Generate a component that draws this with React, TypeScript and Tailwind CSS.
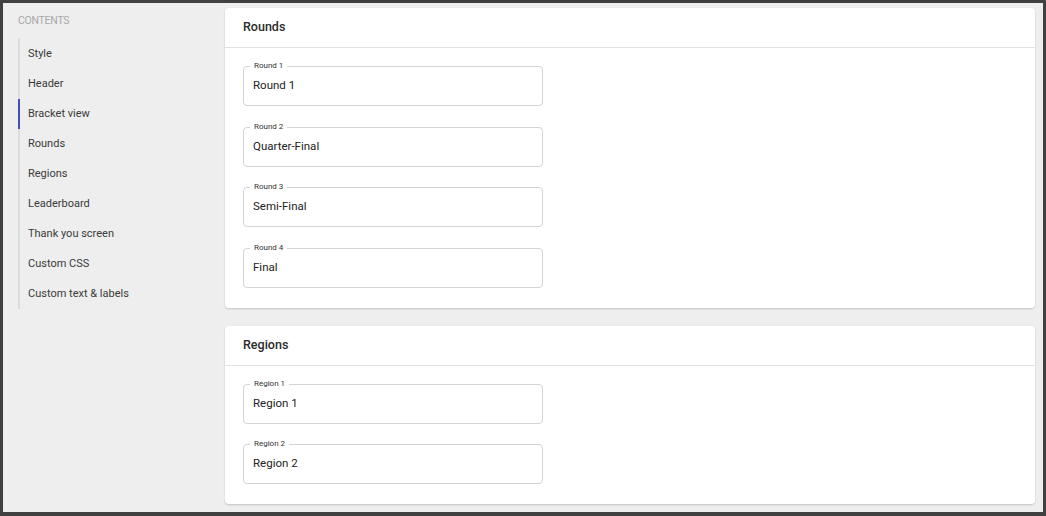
import React from "react";

const nav = [
  "Style",
  "Header",
  "Bracket view",
  "Rounds",
  "Regions",
  "Leaderboard",
  "Thank you screen",
  "Custom CSS",
  "Custom text & labels",
];

const rounds = [
  { label: "Round 1", value: "Round 1" },
  { label: "Round 2", value: "Quarter-Final" },
  { label: "Round 3", value: "Semi-Final" },
  { label: "Round 4", value: "Final" },
];

const regions = [
  { label: "Region 1", value: "Region 1" },
  { label: "Region 2", value: "Region 2" },
];

function OutlinedField({ label, value }: { label: string; value: string }) {
  return (
    <div className="relative w-[300px] h-[40px] border border-[#d4d4d4] rounded-[4px] flex items-center px-[9px]">
      <span className="absolute -top-[6px] left-[6px] px-[4px] bg-white text-[8px] leading-[10px] text-[#333]">
        {label}
      </span>
      <span className="text-[11.5px] text-[#222]">{value}</span>
    </div>
  );
}

function SectionCard({ title, children }: { title: string; children: React.ReactNode }) {
  return (
    <div className="bg-white rounded-[4px] shadow-[0_1px_2px_rgba(0,0,0,0.18)]">
      <div className="h-[40px] flex items-center px-[18px] border-b border-[#e2e2e2]">
        <h2 className="text-[12.5px] font-medium text-[#2a2a2a]">{title}</h2>
      </div>
      <div className="px-[18px] pt-[18px] pb-[20px] flex flex-col gap-[20.5px]">{children}</div>
    </div>
  );
}

export default function App() {
  return (
    <div
      className="w-[1046px] h-[516px] border-[3px] border-b-[4px] border-[#404040] bg-[#eeeeee] flex overflow-hidden"
      style={{ fontFamily: "Roboto, 'Liberation Sans', sans-serif" }}
    >
      {/* Sidebar */}
      <div className="w-[222px] shrink-0 pl-[15px] pt-[11px]">
        <p className="text-[10.5px] leading-[14px] text-[#a8a8a8] tracking-tight">CONTENTS</p>
        <ul className="mt-[10px] pt-[1px] border-l-2 border-[#dcdcdc]">
          {nav.map((item) => (
            <li
              key={item}
              className={
                item === "Bracket view"
                  ? "h-[30px] flex items-center pl-[8px] -ml-[2px] border-l-2 border-[#3f51b5] text-[11px] text-[#3a3a3a]"
                  : "h-[30px] flex items-center pl-[8px] text-[11px] text-[#3a3a3a]"
              }
            >
              {item}
            </li>
          ))}
        </ul>
      </div>

      {/* Main */}
      <div className="flex-1 pt-[5px] pr-[8px] flex flex-col gap-[18px]">
        <SectionCard title="Rounds">
          {rounds.map((r) => (
            <OutlinedField key={r.label} label={r.label} value={r.value} />
          ))}
        </SectionCard>
        <SectionCard title="Regions">
          {regions.map((r) => (
            <OutlinedField key={r.label} label={r.label} value={r.value} />
          ))}
        </SectionCard>
      </div>
    </div>
  );
}
